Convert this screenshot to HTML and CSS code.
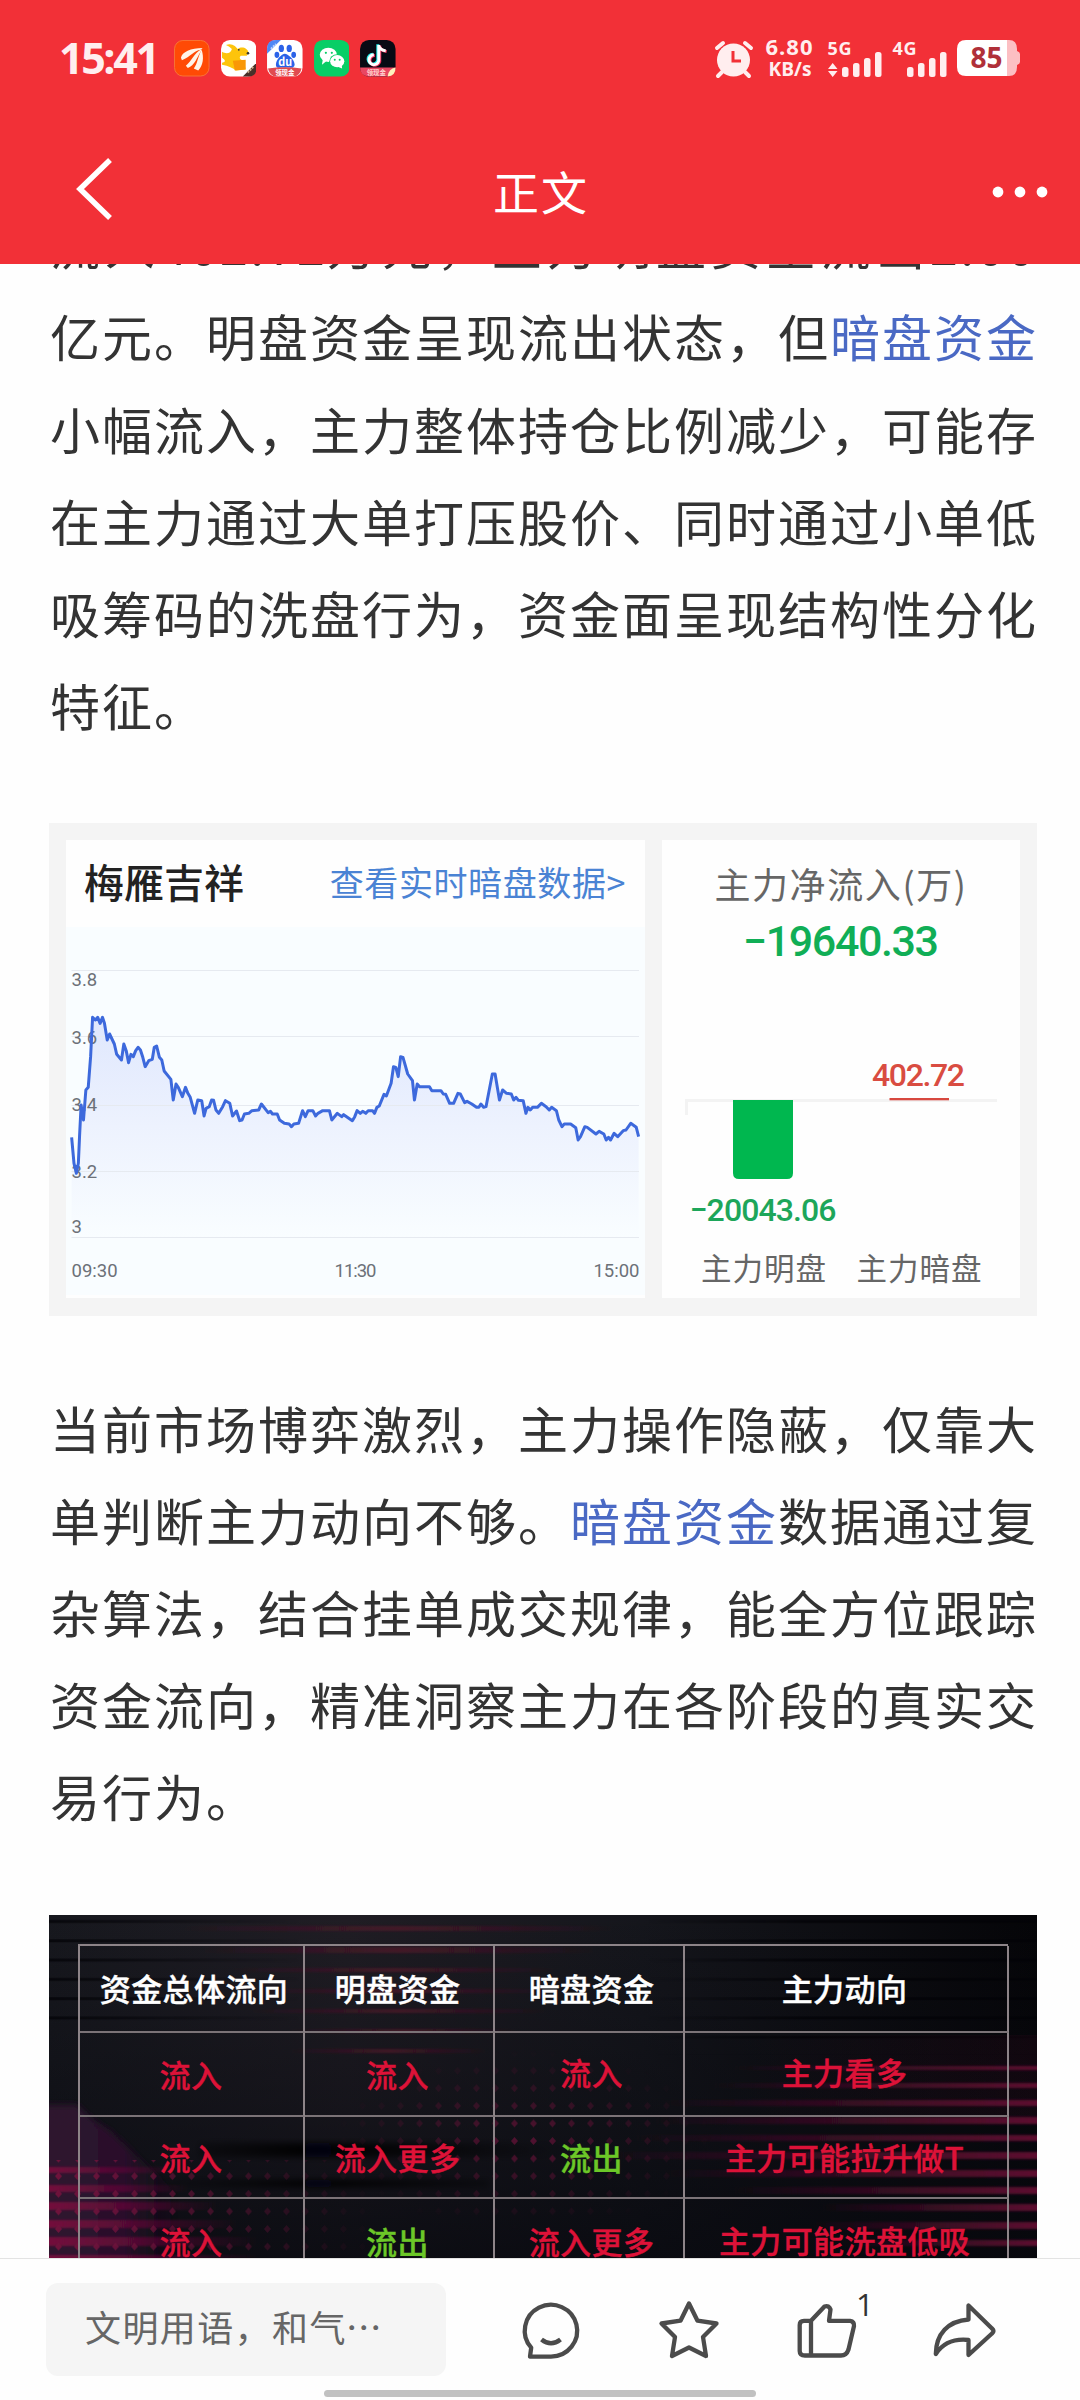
FILE: index.html
```html
<!DOCTYPE html>
<html lang="zh-CN">
<head>
<meta charset="utf-8">
<title>正文</title>
<link rel="stylesheet" href="styles.css">
</head>
<body>
<header class="top">
  <div class="status">
    <span class="clock">15:41</span>
    <div class="apps">
      <svg class="app" viewBox="0 0 36 37"><rect x=".5" y=".5" width="35" height="36" rx="8.500" fill="#ff4a05" stroke="#f87436"/><g fill="#fff4ea"><path d="M7 18C8 12 17 8 29 8L27 10C20 11 17 17 8 20.500Z"/><path d="M12 26C18 22 20 13 28 9.500L27 12C23 18 21 26 14 28.500Z"/><path d="M20 29C24 24 24 17 28 10C30.500 18 29.500 26 24.500 31Z"/></g></svg>
      <svg class="app" viewBox="0 0 36 37"><rect width="36" height="37" rx="9" fill="#fff"/><path d="M5 5Q10 3 14 6L17 9C21 6 27 8 28 13L26 16H20C18 18 19 20 23 21L25 30 15 31Q11 27 1 25V23Q7 22 1 18V12C6 15 10 13 11 9Q8 6 5 5Z" fill="#fdc40b"/><path d="M12 21L25 20V30L14 31Z" fill="#f99807"/><circle cx="18" cy="10" r=".900" fill="#333"/><circle cx="27.300" cy="13.500" r="1.300" fill="#333"/><path d="M36 23L22 37H28Q36 37 36 28Z" fill="#493029"/><path d="M27 33L33 27" stroke="#c9ae8c" stroke-width="2" stroke-dasharray="2 1"/></svg>
      <svg class="app" viewBox="0 0 36 37"><rect width="36" height="37" rx="9" fill="#fff"/><path d="M0 14V9Q0 0 9 0H14Z" fill="#4e87f5"/><path d="M4 9L9 4" stroke="#bcd4ff" stroke-width="2" stroke-dasharray="2 1"/><g fill="#2b62e8"><ellipse cx="14.500" cy="8.500" rx="2.700" ry="3.700"/><ellipse cx="22.500" cy="8.500" rx="2.700" ry="3.700"/><ellipse cx="10" cy="15" rx="2.400" ry="3.200"/><ellipse cx="27" cy="15" rx="2.400" ry="3.200"/><path d="M18 14C21 14 28 20 28 25Q27 29 23 28H14Q9 29 9 25C9 20 15 14 18 14Z"/></g><text class="app-du" x="18.500" y="26" fill="#fff">du</text><path d="M1 29Q18 26 35 29Q33 37 27 37H9Q3 37 1 29Z" fill="#e04b50"/><text class="app-tag" x="18" y="35.500" fill="#fff">领现金</text></svg>
      <svg class="app" viewBox="0 0 36 37"><rect width="36" height="37" rx="9" fill="#08ce66"/><g fill="#fff"><ellipse cx="14.500" cy="15" rx="8.700" ry="7.200"/><path d="M9 19L8 25 13 21Z"/></g><ellipse cx="23.500" cy="21.500" rx="8" ry="7" fill="#08ce66"/><ellipse cx="23.500" cy="21.500" rx="7.200" ry="6.200" fill="#fff"/><path d="M24 27L28.500 29 28 25Z" fill="#fff"/><g fill="#08ce66"><circle cx="12" cy="13" r="1.100"/><circle cx="18" cy="13" r="1.100"/><circle cx="21" cy="20" r="1"/><circle cx="26" cy="20" r="1"/></g></svg>
      <svg class="app" viewBox="0 0 36 37"><rect width="36" height="37" rx="9" fill="#080a14"/><g fill="none" stroke-width="3"><path d="M19 5V19A5 5 0 1 1 14 15" stroke="#25ece8" transform="translate(-1 -.700)"/><path d="M19 5V19A5 5 0 1 1 14 15M19 6Q20 10 26 11" stroke="#f5315d" transform="translate(1 .700)"/><path d="M19 5V19A5 5 0 1 1 14 15M19 6Q20 10 26 11" stroke="#fff"/></g><path d="M0 28H36Q36 37 27 37H9Q0 37 0 28Z" fill="#e94762"/><path d="M36 28Q36 37 28 37Q29 29 36 28Z" fill="#fff0bb"/><text class="app-tag" x="16.500" y="35" fill="#ffd3d0">领现金</text></svg>
    </div>
    <svg class="system" viewBox="712 34 312 48" fill="#ffeeef">
      <circle cx="733.500" cy="60" r="16.500"/><path d="M717 48L723 43M745 43L751 48M722 72L718 76M745 72L749 76" stroke="#ffeeef" stroke-width="4" stroke-linecap="round"/><path d="M733 51V61H741" fill="none" stroke="#f23037" stroke-width="3"/>
      <text class="speed" x="765.500" y="55" textLength="47">6.80</text>
      <text class="unit" x="768.500" y="76" textLength="43" lengthAdjust="spacingAndGlyphs">KB/s</text>
      <text class="net" x="827.500" y="55" textLength="24">5G</text>
      <text class="net" x="892.500" y="55" textLength="24">4G</text>
      <path d="M828 69L832.700 63 837.500 69ZM828 71L832.700 77 837.500 71Z"/>
      <rect x="842" y="67" width="6.500" height="10" rx="2.500"/><rect x="853" y="63" width="6.500" height="14" rx="2.500"/><rect x="864" y="58" width="6.500" height="19" rx="2.500"/><rect x="875" y="52" width="6.500" height="25" rx="2.500"/>
      <rect x="907" y="67" width="6.500" height="10" rx="2.500"/><rect x="918" y="63" width="6.500" height="14" rx="2.500"/><rect x="929" y="58" width="6.500" height="19" rx="2.500"/><rect x="940" y="52" width="6.500" height="25" rx="2.500"/>
      <path d="M1007 40H1009Q1017 40 1017 49V51Q1020 52 1020 54V62Q1020 64 1017 65V67Q1017 76 1009 76H1007Z" fill="#fcbfc3"/>
      <path d="M966 40H1007V76H966Q957 76 957 67V49Q957 40 966 40Z" fill="#fff"/>
      <text class="battery" x="986.500" y="68" fill="#b03039">85</text>
    </svg>
  </div>
  <nav class="nav">
    <svg class="back" viewBox="0 0 60 80"><path d="M44 11L14 40 44 69" fill="none" stroke="#fff" stroke-width="5.500"/></svg>
    <h1 class="title">正文</h1>
    <svg class="more" viewBox="0 0 60 20" fill="#fff"><circle cx="8" cy="10" r="5.400"/><circle cx="30" cy="10" r="5.400"/><circle cx="52" cy="10" r="5.400"/></svg>
  </nav>
</header>

<main class="article">
  <p class="para para-first">
    <span class="line line-wide">流入<span class="num">402.72</span>万元，主力明盘资金流出<span class="num">2.00</span></span>
    <span class="line">亿元。明盘资金呈现流出状态，但<a class="link">暗盘资金</a></span>
    <span class="line">小幅流入，主力整体持仓比例减少，可能存</span>
    <span class="line">在主力通过大单打压股价、同时通过小单低</span>
    <span class="line">吸筹码的洗盘行为，资金面呈现结构性分化</span>
    <span class="line">特征。</span>
  </p>

  <section class="panel">
    <div class="card quote">
      <div class="quote-head"><h2 class="stock">梅雁吉祥</h2><a class="more-link">查看实时暗盘数据&gt;</a></div>
      <svg class="chart" viewBox="66 927 579 368">
        <defs><linearGradient id="area" x1="0" y1="0" x2="0" y2="1"><stop offset="0" stop-color="#dfe7fd"/><stop offset=".5" stop-color="#edf2fe"/><stop offset="1" stop-color="#f9fdff"/></linearGradient></defs>
        <g transform="translate(40 810) scale(.3954 .33333)">
          <path fill="url(#area)" d="M80 982L86 1060 92 1090 97 1060 100 980 104 885 110 930 116 840 122 832 128 740 133 622 140 630 146 622 152 640 158 622 163 640 170 690 176 672 188 702 194 733 206 750 212 702 224 758 230 733 236 740 242 722 248 712 254 720 260 742 266 770 275 752 284 748 292 708 302 742 308 750 314 783 331 808 337 870 344 822 350 833 360 860 368 832 380 862 391 910 399 870 409 872 415 918 420 895 436 870 452 910 469 872 480 880 487 918 497 903 505 932 517 912 536 902 553 900 560 882 577 908 600 912 606 930 636 950 654 940 664 902 671 920 678 902 690 902 697 918 715 902 732 902 738 930 752 910 790 932 802 902 841 902 846 910 858 888 870 853 876 858 888 820 894 770 900 772 906 800 912 740 918 742 930 792 942 812 947 870 954 822 960 830 985 830 991 842 1014 842 1026 853 1036 880 1046 880 1057 850 1074 878 1104 892 1128 890 1144 792 1151 792 1162 870 1170 840 1192 852 1198 870 1222 872 1229 910 1234 892 1258 892 1268 880 1288 900 1306 902 1312 930 1320 950 1342 942 1355 953 1361 990 1378 950 1406 972 1426 972 1432 990 1443 990 1452 970 1461 980 1494 940 1508 952 1514 980V1281H80Z"/>
        </g>
        <g stroke="#e6eaf0" stroke-width="1.200"><path d="M71.500 970.500H639M71.500 1036.500H639M71.500 1105.500H639M71.500 1171.500H639M71.500 1237.500H639"/></g>
        <g class="tick" fill="#6c7178"><text x="71.500" y="985.500">3.8</text><text x="71.500" y="1043.500">3.6</text><text x="71.500" y="1110.500">3.4</text><text x="71.500" y="1177.500">3.2</text><text x="71.500" y="1232.500">3</text><text x="71.500" y="1276.500">09:30</text><text x="355.500" y="1276.500" text-anchor="middle" textLength="42">11:30</text><text x="639.500" y="1276.500" text-anchor="end">15:00</text></g>
        <g transform="translate(40 810) scale(.3954 .33333)">
          <polyline fill="none" stroke="#3d69dc" stroke-width="3" stroke-linejoin="round" vector-effect="non-scaling-stroke" points="80,982 86,1060 92,1090 97,1060 100,980 104,885 110,930 116,840 122,832 128,740 133,622 140,630 146,622 152,640 158,622 163,640 170,690 176,672 188,702 194,733 206,750 212,702 218,722 224,758 230,733 236,740 242,722 248,712 254,720 260,742 266,770 275,752 284,748 289,712 295,708 302,742 308,750 314,783 331,808 337,870 344,822 350,833 360,860 368,832 374,850 380,862 391,910 399,870 409,872 415,918 420,895 428,890 434,870 439,871 445,900 452,910 462,890 469,872 480,880 487,918 497,903 505,932 511,930 517,912 528,910 536,902 553,900 560,882 577,908 583,904 588,912 600,912 606,930 618,940 630,942 636,950 642,942 654,940 664,902 671,920 678,902 690,902 697,918 703,910 715,902 732,902 738,930 752,910 763,920 768,914 790,932 796,920 802,902 810,910 816,904 824,910 830,902 841,902 846,910 852,892 858,888 870,853 876,858 888,820 894,770 900,772 906,800 912,740 918,742 930,792 942,812 947,870 954,822 960,830 985,830 991,842 1014,842 1020,852 1026,853 1036,880 1046,880 1057,850 1063,852 1074,878 1080,874 1092,882 1104,892 1110,892 1115,882 1122,892 1128,890 1144,792 1151,792 1162,870 1170,840 1180,850 1192,852 1198,870 1204,862 1210,871 1222,872 1229,910 1234,892 1240,900 1246,892 1258,892 1268,880 1280,890 1288,900 1294,892 1306,902 1312,930 1320,950 1326,942 1342,942 1355,953 1361,990 1367,980 1378,950 1384,952 1406,972 1414,964 1426,972 1432,990 1438,982 1443,990 1452,970 1461,980 1475,962 1482,960 1494,940 1508,952 1514,980"/>
        </g>
      </svg>
    </div>
    <div class="card flow">
      <h3 class="flow-title">主力净流入(万)</h3>
      <svg class="bars" viewBox="662 916 358 382">
        <text class="total" x="743" y="956" textLength="196">−19640.33</text>
        <path d="M686.500 1115V1100.500H997" fill="none" stroke="#f3f3f3" stroke-width="3"/>
        <path d="M733 1100H793V1173Q793 1179 787 1179H739Q733 1179 733 1173Z" fill="#00b74f"/>
        <rect x="889.500" y="1098" width="59.500" height="2.300" fill="#d7483f"/>
        <text class="amount up" x="872" y="1086" textLength="93">402.72</text>
        <text class="amount down" x="689.500" y="1221" textLength="147">−20043.06</text>
        <g class="axis" fill="#666"><text x="701" y="1279.500">主力明盘</text><text x="856.500" y="1279.500">主力暗盘</text></g>
      </svg>
    </div>
  </section>

  <p class="para para-second">
    <span class="line">当前市场博弈激烈，主力操作隐蔽，仅靠大</span>
    <span class="line">单判断主力动向不够。<a class="link">暗盘资金</a>数据通过复</span>
    <span class="line">杂算法，结合挂单成交规律，能全方位跟踪</span>
    <span class="line">资金流向，精准洞察主力在各阶段的真实交</span>
    <span class="line">易行为。</span>
  </p>

  <section class="banner">
    <svg class="backdrop" viewBox="0 0 988 370" preserveAspectRatio="xMidYMin slice">
      <defs>
        <linearGradient id="night" x1="0" y1="0" x2="1" y2="0"><stop offset="0" stop-color="#17181e"/><stop offset=".3" stop-color="#201d24"/><stop offset=".6" stop-color="#15161c"/><stop offset="1" stop-color="#050508"/></linearGradient>
        <linearGradient id="shade" x1="0" y1="0" x2="0" y2="1"><stop offset="0" stop-color="#08090f" stop-opacity="0"/><stop offset="1" stop-color="#08090f" stop-opacity=".85"/></linearGradient>
        <linearGradient id="left" x1="0" y1="0" x2="1" y2="0"><stop offset="0" stop-color="#730b3c"/><stop offset="1" stop-color="#730b3c" stop-opacity="0"/></linearGradient>
        <linearGradient id="right" x1="0" y1="0" x2="1" y2="0"><stop offset="0" stop-color="#5c0e30" stop-opacity="0"/><stop offset="1" stop-color="#5c0e30"/></linearGradient>
        <linearGradient id="mid" x1="0" y1="0" x2="1" y2="0"><stop offset="0" stop-color="#68122b" stop-opacity="0"/><stop offset=".5" stop-color="#68122b" stop-opacity=".5"/><stop offset="1" stop-color="#68122b" stop-opacity="0"/></linearGradient>
        <linearGradient id="black" x1="0" y1="0" x2="1" y2="0"><stop offset="0" stop-color="#030407" stop-opacity="0"/><stop offset=".4" stop-color="#030407"/><stop offset="1" stop-color="#030407" stop-opacity="0"/></linearGradient>
        <linearGradient id="plum" x1="0" y1="0" x2="1" y2="0"><stop offset="0" stop-color="#2f1330"/><stop offset=".6" stop-color="#2a112b"/><stop offset="1" stop-color="#1a0c1c" stop-opacity="0"/></linearGradient>
        <linearGradient id="fade" x1="0" y1="0" x2="1" y2="0"><stop offset="0" stop-color="#fff"/><stop offset="1" stop-color="#fff" stop-opacity="0"/></linearGradient>
        <linearGradient id="rise" x1="0" y1="0" x2="1" y2="0"><stop offset="0" stop-color="#fff" stop-opacity="0"/><stop offset=".4" stop-color="#fff"/><stop offset="1" stop-color="#fff"/></linearGradient>
        <radialGradient id="spot"><stop offset="0" stop-color="#fff"/><stop offset="1" stop-color="#fff" stop-opacity="0"/></radialGradient>
        <pattern id="dots" width="19" height="17.600" patternUnits="userSpaceOnUse" y="6"><path d="M9.500 5L13 8.800 9.500 12.600 6 8.800Z" fill="#70133c"/></pattern>
        <pattern id="scan" width="20" height="19.300" patternUnits="userSpaceOnUse"><rect y="5" width="20" height="3" fill="#020306" opacity=".75"/></pattern>
        <mask id="mask-scan"><rect width="250" height="120" fill="url(#fade)"/></mask>
        <mask id="mask-left"><rect y="245" width="330" height="125" fill="url(#fade)"/></mask>
        <mask id="mask-mid"><ellipse cx="475" cy="225" rx="190" ry="90" fill="url(#spot)"/></mask>
        <mask id="mask-right"><rect x="600" width="388" height="205" fill="url(#rise)"/></mask>
        <filter id="soft" x="-5%" y="-5%" width="110%" height="110%"><feGaussianBlur stdDeviation="0 1.300"/></filter>
        <filter id="softer" x="-10%" y="-10%" width="120%" height="120%"><feGaussianBlur stdDeviation="3"/></filter>
      </defs>
      <rect width="988" height="370" fill="url(#night)"/>
      <rect width="988" height="370" fill="url(#shade)"/>
      <rect width="250" height="120" fill="url(#scan)" mask="url(#mask-scan)"/>
      <rect x="600" width="388" height="140" fill="url(#scan)" mask="url(#mask-right)"/>
      <path d="M-10 190H28Q42 205 60 215L130 280V380H-10Z" fill="url(#plum)" filter="url(#softer)"/>
      <path d="M150 228H520V242H150ZM100 265H440V272H100Z" fill="url(#black)" filter="url(#softer)"/>
      <g fill="url(#mid)" filter="url(#soft)"><rect x="130" y="11" width="440" height="5"/><rect x="150" y="32" width="400" height="6"/><rect x="180" y="53" width="330" height="4"/><rect x="200" y="74" width="310" height="4"/><rect x="200" y="94" width="300" height="4"/><rect x="240" y="114" width="230" height="4"/><rect x="240" y="134" width="200" height="4"/></g>
      <g fill="url(#left)" filter="url(#soft)"><rect y="252" width="130" height="6"/><rect y="270" width="140" height="7"/><rect y="287" width="170" height="8"/><rect y="305" width="190" height="8"/><rect y="322" width="210" height="9"/><rect y="340" width="210" height="9"/></g>
      <rect y="245" width="330" height="125" fill="url(#dots)" mask="url(#mask-left)"/>
      <rect x="280" y="135" width="390" height="180" fill="url(#dots)" mask="url(#mask-mid)" opacity=".7"/>
      <rect x="700" y="120" width="288" height="85" fill="url(#right)" opacity=".13"/>
      <g fill="url(#right)" filter="url(#soft)"><rect x="680" y="151" width="308" height="4"/><rect x="660" y="168" width="328" height="5"/><rect x="610" y="185" width="378" height="6"/><rect x="600" y="202" width="388" height="7"/><rect x="580" y="220" width="408" height="6"/><rect x="550" y="237" width="438" height="7"/><rect x="610" y="255" width="378" height="7"/><rect x="680" y="272" width="308" height="7"/><rect x="770" y="289" width="218" height="7"/><rect x="760" y="307" width="228" height="7"/><rect x="790" y="325" width="198" height="6"/></g>
    </svg>
    <div class="table">
      <div class="cell head shift">资金总体流向</div><div class="cell head">明盘资金</div><div class="cell head third">暗盘资金</div><div class="cell head">主力动向</div>
      <div class="cell in first">流入</div><div class="cell in">流入</div><div class="cell in third raised">流入</div><div class="cell in raised">主力看多</div>
      <div class="cell in first">流入</div><div class="cell in">流入更多</div><div class="cell out third">流出</div><div class="cell in">主力可能拉升做T</div>
      <div class="cell in first low">流入</div><div class="cell out low">流出</div><div class="cell in third low">流入更多</div><div class="cell in">主力可能洗盘低吸</div>
    </div>
  </section>
</main>

<footer class="bottom">
  <div class="tools">
    <div class="comment">文明用语，和气<span class="dots">⋯</span></div>
    <div class="actions">
      <svg class="icon" viewBox="519 2297 64 64"><path d="M551 2355.600A26.200 25.900 0 1 0 531.200 2346.700L530 2355.600Z"/><path d="M541.500 2338.500Q551 2346 560.500 2338.500" stroke-width="4.500" stroke-linecap="butt"/></svg>
      <svg class="icon" viewBox="656.500 2297 64 64"><path d="M688.500 2302.500L697 2319.700 716 2322.500 702.500 2336 705.500 2355 688.500 2346.500 671.500 2355 674.500 2336 661 2322.500 680 2319.700Z"/></svg>
      <div class="like"><svg class="icon" viewBox="795 2297 64 64"><path d="M811 2319.800L824.500 2305.500Q829 2304 830.500 2308.500L829 2319.800H850Q854.500 2320.500 854 2325L848.500 2348.500Q846.500 2354.500 841 2354.500H805Q799.700 2354.500 799.700 2350V2324Q799.700 2319.800 804 2319.800ZM811 2319.800V2354.500"/></svg><span class="count">1</span></div>
      <svg class="icon" viewBox="933 2297 64 64"><path d="M968.500 2304.500V2318.500C948 2320 936 2333 935.800 2353C943 2342 954 2337.500 968.500 2339V2354L992 2332.500Q995 2330 992 2327.500Z"/></svg>
    </div>
  </div>
  <div class="home"></div>
</footer>
</body>
</html>
```
FILE: styles.css
```css
* { box-sizing: border-box; }
body {
  margin: 0;
  width: 1080px;
  height: 2400px;
  display: flex;
  flex-direction: column;
  overflow: hidden;
  background: #fefefe;
  color: #333;
  font-family: "Noto Sans CJK SC", sans-serif;
}
svg { display: block; flex: none; }
h1, h2, h3, p { margin: 0; font-weight: 400; }

.top { height: 264px; flex: none; background: #f23037; color: #fff; }
.status { height: 114px; padding: 34px 56px 0 59px; display: flex; align-items: flex-start; }
.clock { width: 115px; font-family: "Open Sans", sans-serif; font-size: 43px; line-height: 47px; font-weight: 700; letter-spacing: -2.400px; color: #ffeeef; }
.apps { display: flex; gap: 11px; padding-top: 6px; }
.app { width: 35.600px; height: 36.500px; }
.app-du { font: 700 11px "Noto Sans CJK SC", sans-serif; text-anchor: middle; }
.app-tag { font: 700 6.500px "Noto Sans CJK SC", sans-serif; text-anchor: middle; }
.system { width: 312px; height: 48px; margin-left: auto; }
.speed, .unit, .net, .battery { font-family: "Open Sans", sans-serif; font-weight: 700; }
.speed { font-size: 22px; }
.unit { font-size: 19px; }
.net { font-size: 18px; }
.battery { font-size: 28px; text-anchor: middle; }

.nav { height: 150px; padding: 0 30px 0 66px; display: grid; grid-template-columns: 118px 1fr 118px; align-items: center; }
.back { width: 60px; height: 80px; }
.title { text-align: center; font-size: 46px; line-height: 70px; letter-spacing: 2px; margin: 2px 34px 0 0; }
.more { width: 60px; height: 20px; justify-self: end; margin-top: 6px; }

.article { height: 1994px; flex: none; padding: 0 43px 0 49px; overflow: hidden; }
.para { font-size: 50px; letter-spacing: 2px; white-space: nowrap; }
.para-first { margin-top: -67px; line-height: 92.250px; }
.para-second { margin-top: 65px; line-height: 92px; }
.line { display: block; padding-left: 1px; }
.line-wide { letter-spacing: 4.800px; }
.num { letter-spacing: 2.500px; }
.link { color: #4a69c4; }

.panel { height: 493px; margin-top: 72.500px; padding: 17px; display: grid; grid-template-columns: 579px 358px; gap: 17px; background: #f4f4f4; }
.panel, .banner { width: 988px; }
.card { height: 458px; background: #fefefe; }
.quote-head { height: 87px; padding: 0 19px 0 18px; display: flex; justify-content: space-between; align-items: center; }
.stock { font-size: 40px; line-height: 60px; font-weight: 500; color: #222; margin-bottom: 5px; }
.more-link { font-size: 34px; line-height: 60px; letter-spacing: .600px; color: #4a83d4; margin-bottom: 3px; }
.chart { width: 579px; height: 368px; background: #f9fdff; }
.tick { font-family: Roboto, sans-serif; font-size: 18.500px; }
.flow-title { height: 76px; padding-top: 13px; font-size: 36px; line-height: 60px; letter-spacing: 1.600px; text-align: center; color: #666; }
.bars { width: 358px; height: 382px; }
.total, .amount { font-family: Roboto, sans-serif; font-weight: 500; }
.total { font-size: 43px; fill: #10ae56; }
.amount { font-size: 32px; }
.up { fill: #d94c41; }
.down { fill: #1da65a; }
.axis { font-size: 30.500px; letter-spacing: 1px; }

.banner { position: relative; height: 370px; margin-top: 74px; padding: 29px 29px 0; background: #101116; }
.backdrop { position: absolute; inset: 0; width: 988px; height: 370px; }
.table { position: relative; width: 930px; display: grid; grid-template-columns: 225px 190px 190px 324px; grid-template-rows: 87px 84px 82px 84px; border-top: 2px solid #8d8488; border-left: 2px solid #8d8488; }
.cell { display: flex; align-items: center; justify-content: center; padding-right: 3px; padding-bottom: 2px; border-right: 2px solid #8d8488; border-bottom: 2px solid #7b7377; font-size: 31px; letter-spacing: .400px; font-weight: 500; -webkit-text-stroke: .400px currentColor; white-space: nowrap; }
.head { color: #fff; }
.in { color: #dd1238; }
.out { color: #6cc728; }
.first { padding-left: 2px; }
.shift { padding-left: 8px; }
.third { padding-left: 8px; }
.raised { padding-bottom: 6px; }
.low { padding-top: 3px; }

.bottom { height: 142px; flex: none; border-top: 1.500px solid #e3e3e3; background: #fefefe; }
.tools { height: 131px; padding: 24px 46px 0; display: flex; gap: 36px; }
.comment { width: 400px; height: 93px; padding-left: 39px; border-radius: 12px; background: #f5f5f5; color: #666; font-size: 36px; letter-spacing: 1.400px; line-height: 87px; white-space: nowrap; }
.dots { display: inline-block; margin-left: -1px; }
.actions { display: grid; grid-template-columns: repeat(4, 138px); justify-items: center; height: 93px; align-items: center; }
.icon { width: 64px; height: 64px; fill: none; stroke: #4b4b4b; stroke-width: 4.300; stroke-linejoin: round; stroke-linecap: round; }
.like { position: relative; }
.count { position: absolute; left: 61px; top: -12px; font-family: "Open Sans", sans-serif; font-size: 31px; line-height: 36px; font-weight: 400; color: #333; }
.home { width: 432px; height: 7px; margin: 0 auto; border-radius: 4px; background: #c1c1c1; }
```
